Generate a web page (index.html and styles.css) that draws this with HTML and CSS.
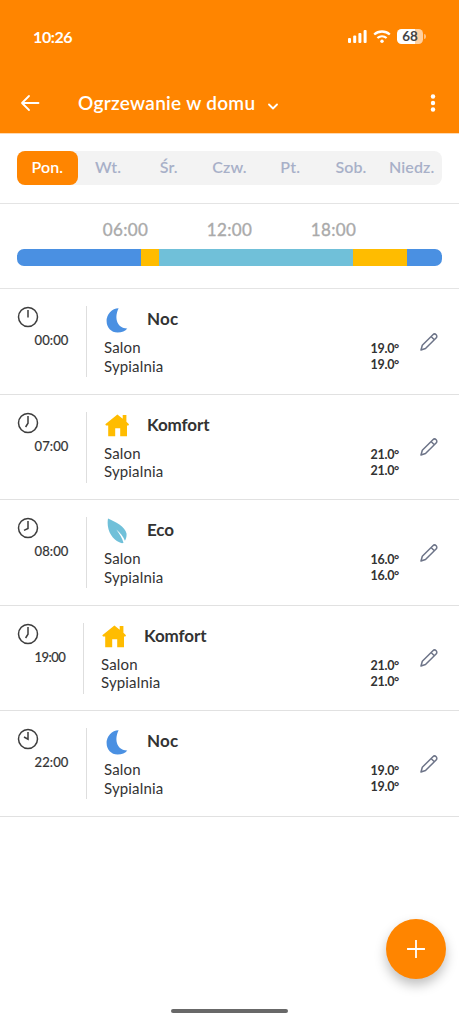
FILE: index.html
```html
<!DOCTYPE html>
<html lang="pl">
<head>
<meta charset="utf-8">
<meta name="viewport" content="width=device-width, initial-scale=1">
<title>Ogrzewanie w domu</title>
<link rel="stylesheet" href="styles.css">
</head>
<body>
<svg width="0" height="0" class="defs">
  <symbol id="moon" viewBox="0 0 22 25"><path d="M12.600.3A12.400 12.400 0 0 0 .6 13c0 6.600 4.600 11.500 11 11.500 4.200 0 7.800-1.300 9.700-4.100C12.500 20.800 7.200 11.500 12.600.3Z"/></symbol>
  <symbol id="house" viewBox="0 0 24 23"><path d="M12.400.4 17.700 4.700V1H21.400V7.700L24 10.200 23.400 11.600H22V22.300H15.200V14.200H10.200V22.300H3.200V11.600H1L.3 10.200Z"/></symbol>
  <symbol id="leaf" viewBox="0 0 20 26"><path d="M1 .5C8 3.600 18.300 8.500 19.500 15.600c.3 2.300-.4 5.500-1.600 7.200C16.500 18.600 13 14.700 9.300 11.500c3 4.300 6.200 8.800 7.200 13.200-1 .9-3.100.3-4.200-.4C4.700 21-.9 11.600 1 .5Z"/></symbol>
  <symbol id="pencil" viewBox="0 0 18 18"><path d="M1 17 2.300 12.300 12.900 1.700a2.200 2.200 0 0 1 3.200 3.300L5.500 15.500ZM11.100 3.500 14.300 6.700"/></symbol>
</svg>

<header class="header">
  <div class="status">
    <span class="status-time">10:26</span>
    <svg class="signal" viewBox="0 0 19 13"><rect x="0" y="8" width="3" height="5" rx="1"/><rect x="5.200" y="5.500" width="3" height="7.500" rx="1"/><rect x="10.400" y="3" width="3" height="10" rx="1"/><rect x="15.600" y="0" width="3" height="13" rx="1"/></svg>
    <svg class="wifi" viewBox="0 0 18 13"><path d="M1.200 4.500a11.600 11.600 0 0 1 15.600 0M4.400 8a7 7 0 0 1 9.200 0"/><circle cx="9" cy="11.300" r="1.700"/></svg>
    <span class="battery">68</span><span class="battery-cap"></span>
  </div>
  <div class="toolbar">
    <svg class="back" viewBox="0 0 20 18"><path d="M9 2 2 9l7 7M2 9h16.500"/></svg>
    <h1 class="title">Ogrzewanie w domu</h1>
    <svg class="chevron" viewBox="0 0 10 7"><path d="m1 1.500 4 4 4-4"/></svg>
    <svg class="more" viewBox="0 0 6 18"><circle cx="3" cy="2.500" r="2.200"/><circle cx="3" cy="9" r="2.200"/><circle cx="3" cy="15.500" r="2.200"/></svg>
  </div>
</header>

<section class="days-panel">
  <nav class="days">
    <span class="day active">Pon.</span><span class="day">Wt.</span><span class="day">Śr.</span><span class="day">Czw.</span><span class="day">Pt.</span><span class="day">Sob.</span><span class="day">Niedz.</span>
  </nav>
</section>

<section class="timeline">
  <div class="hours"><span>06:00</span><span>12:00</span><span>18:00</span></div>
  <div class="bar"><i class="night seg-a"></i><i class="comfort seg-b"></i><i class="eco seg-c"></i><i class="comfort seg-d"></i><i class="night seg-e"></i></div>
</section>

<main class="list">
  <article class="row row-1">
    <div class="when"><svg class="clock" viewBox="0 0 22 22"><circle cx="11" cy="11" r="9.500"/><path d="M11 4v7.500"/></svg><span class="time">00:00</span></div>
    <div class="mode"><div class="mode-head"><svg class="icon moon"><use href="#moon"/></svg><h2 class="name noc">Noc</h2></div><p class="room salon">Salon</p><p class="room">Sypialnia</p></div>
    <div class="temps"><span>19.0°</span><span>19.0°</span></div>
    <svg class="pencil"><use href="#pencil"/></svg>
  </article>
  <article class="row row-2">
    <div class="when"><svg class="clock" viewBox="0 0 22 22"><circle cx="11" cy="11" r="9.500"/><path d="M11 4v7.200L8.600 15"/></svg><span class="time">07:00</span></div>
    <div class="mode"><div class="mode-head"><svg class="icon house"><use href="#house"/></svg><h2 class="name">Komfort</h2></div><p class="room salon">Salon</p><p class="room">Sypialnia</p></div>
    <div class="temps"><span>21.0°</span><span>21.0°</span></div>
    <svg class="pencil"><use href="#pencil"/></svg>
  </article>
  <article class="row row-3">
    <div class="when"><svg class="clock" viewBox="0 0 22 22"><circle cx="11" cy="11" r="9.500"/><path d="M11 4v7.500L7 13.400"/></svg><span class="time">08:00</span></div>
    <div class="mode"><div class="mode-head"><svg class="icon leaf"><use href="#leaf"/></svg><h2 class="name eco-name">Eco</h2></div><p class="room salon">Salon</p><p class="room">Sypialnia</p></div>
    <div class="temps"><span>16.0°</span><span>16.0°</span></div>
    <svg class="pencil"><use href="#pencil"/></svg>
  </article>
  <article class="row row-4">
    <div class="when"><svg class="clock" viewBox="0 0 22 22"><circle cx="11" cy="11" r="9.500"/><path d="M11 4v7.200L8.600 15"/></svg><span class="time">19:00</span></div>
    <div class="mode"><div class="mode-head"><svg class="icon house"><use href="#house"/></svg><h2 class="name">Komfort</h2></div><p class="room salon">Salon</p><p class="room">Sypialnia</p></div>
    <div class="temps"><span>21.0°</span><span>21.0°</span></div>
    <svg class="pencil"><use href="#pencil"/></svg>
  </article>
  <article class="row row-5">
    <div class="when"><svg class="clock" viewBox="0 0 22 22"><circle cx="11" cy="11" r="9.500"/><path d="M11 4v7.200L7 9"/></svg><span class="time">22:00</span></div>
    <div class="mode"><div class="mode-head"><svg class="icon moon"><use href="#moon"/></svg><h2 class="name noc">Noc</h2></div><p class="room salon">Salon</p><p class="room">Sypialnia</p></div>
    <div class="temps"><span>19.0°</span><span>19.0°</span></div>
    <svg class="pencil"><use href="#pencil"/></svg>
  </article>
</main>

<button class="fab" aria-label="Dodaj"><svg viewBox="0 0 18 18"><path d="M9 .5v17M.5 9h17"/></svg></button>
<div class="home-indicator"></div>
</body>
</html>
```

FILE: styles.css
```css
* { box-sizing: border-box; margin: 0; padding: 0; }
body {
  position: relative;
  width: 459px;
  height: 1024px;
  overflow: hidden;
  background: #fff;
  color: #333;
  font-family: Lato, "Open Sans", sans-serif;
}
.defs { position: absolute; }
svg { display: block; flex: none; }

.header { height: 134px; background: #ff8500; color: #fff; border-bottom: 1px solid #ffd9b0; }
.status { display: flex; align-items: center; height: 74px; padding: 0 34px 1px 33px; }
.status-time { flex: 1; font-size: 16px; font-weight: 700; letter-spacing: -.4px; }
.signal { width: 19px; height: 13px; fill: #fff; margin-right: 6px; }
.wifi { width: 18px; height: 13px; fill: #fff; margin-right: 6px; }
.wifi path { fill: none; stroke: #fff; stroke-width: 2.300; }
.battery {
  width: 26px; height: 15px; border-radius: 4.500px;
  background: linear-gradient(90deg, #fff 68%, #ffd0a0 70%);
  color: #444; font: 700 13.500px/15px Lato, sans-serif; text-align: center;
}
.battery-cap { width: 2px; height: 5px; margin: 0 -1px 0 1px; border-radius: 0 2px 2px 0; background: #ffc080; }

.toolbar { display: flex; align-items: center; height: 59px; padding: 0 23px 1px 20px; }
.back { width: 20px; height: 18px; }
.back path, .chevron path, .fab path { fill: none; stroke: #fff; stroke-width: 1.800; stroke-linecap: round; stroke-linejoin: round; }
.title { margin-left: 38px; width: 190px; font-size: 19px; font-weight: 600; letter-spacing: .3px; white-space: nowrap; line-height: 24px; padding-bottom: 1px; }
.chevron { width: 10px; height: 7px; margin-top: 6px; }
.more { width: 6px; height: 18px; margin-left: auto; fill: #fff; }

.days-panel { height: 70px; padding: 17px 17px 0; border-bottom: 1px solid #e4e4e4; }
.days { display: grid; grid-template-columns: repeat(7, 1fr); height: 34px; background: #f3f3f3; border-radius: 8px; }
.day { border-radius: 8px; color: #a8b0c8; font-size: 16px; font-weight: 600; line-height: 32px; text-align: center; letter-spacing: .1px; }
.day.active { background: #ff8500; color: #fff; }

.timeline { height: 85px; padding: 15px 17px 0; border-bottom: 1px solid #e4e4e4; }
.hours { display: flex; justify-content: center; gap: 56px; color: #aaa; font-size: 17px; line-height: 22px; -webkit-text-stroke: .35px #aaa; }
.hours span { width: 48px; text-align: center; letter-spacing: .4px; }
.bar { display: flex; height: 17px; margin-top: 8px; border-radius: 7px; overflow: hidden; }
.night { background: #4a90e2; }
.comfort { background: #ffbc00; }
.eco { background: #70c0d9; }
.seg-a { width: 124px; }
.seg-b { width: 18px; }
.seg-c { width: 194px; }
.seg-d { width: 54px; }
.seg-e { flex: 1; }

.row { display: flex; height: 105.500px; padding: 17px 21px 0 17px; border-bottom: 1px solid #e1e1e1; }
.when { width: 69px; }
.row-4 .when { width: 66px; }
.clock { width: 22px; height: 22px; }
.clock circle, .clock path { fill: none; stroke: #3d3d3d; stroke-width: 1.500; }
.time { display: block; margin: 4px 0 0 17.500px; font-size: 13px; line-height: 16px; letter-spacing: .1px; -webkit-text-stroke: .2px #333; }
.row-4 .time { letter-spacing: -.5px; }
.mode { flex: 1; height: 71px; border-left: 1px solid #dedede; padding-left: 17px; }
.mode-head { display: flex; align-items: center; height: 26px; }
.icon { margin-left: 1px; }
.moon { width: 22px; height: 25px; fill: #4a90e2; margin: 3px 19px 0 2px; }
.house { width: 24px; height: 23px; fill: #ffbc00; margin: 2px 18px 0 1px; }
.leaf { width: 20px; height: 26px; fill: #70c0d9; margin: 2px 20px 0 3px; }
.name { font-size: 17px; font-weight: 700; line-height: 24px; letter-spacing: -.1px; }
.noc { letter-spacing: .2px; }
.room { font-size: 15px; line-height: 18.500px; letter-spacing: .15px; }
.salon { margin-top: 6px; }
.temps { display: flex; flex-direction: column; align-items: flex-end; width: 50px; padding-top: 35px; margin-right: 21px; font-size: 12.500px; font-weight: 700; line-height: 16px; letter-spacing: -.3px; }
.pencil { width: 18px; height: 18px; margin-top: 26.500px; fill: none; stroke: #6d7488; stroke-width: 1.500; stroke-linejoin: round; }

.fab {
  position: absolute; left: 386px; top: 918.500px; width: 60px; height: 60px;
  display: flex; align-items: center; justify-content: center;
  border: 0; border-radius: 50%; background: #ff8500; box-shadow: 0 6px 12px rgba(0, 0, 0, .25);
}
.fab svg { width: 18px; height: 18px; }
.home-indicator { position: absolute; left: 171px; top: 1009px; width: 117px; height: 4px; border-radius: 2px; background: #686868; }
```
